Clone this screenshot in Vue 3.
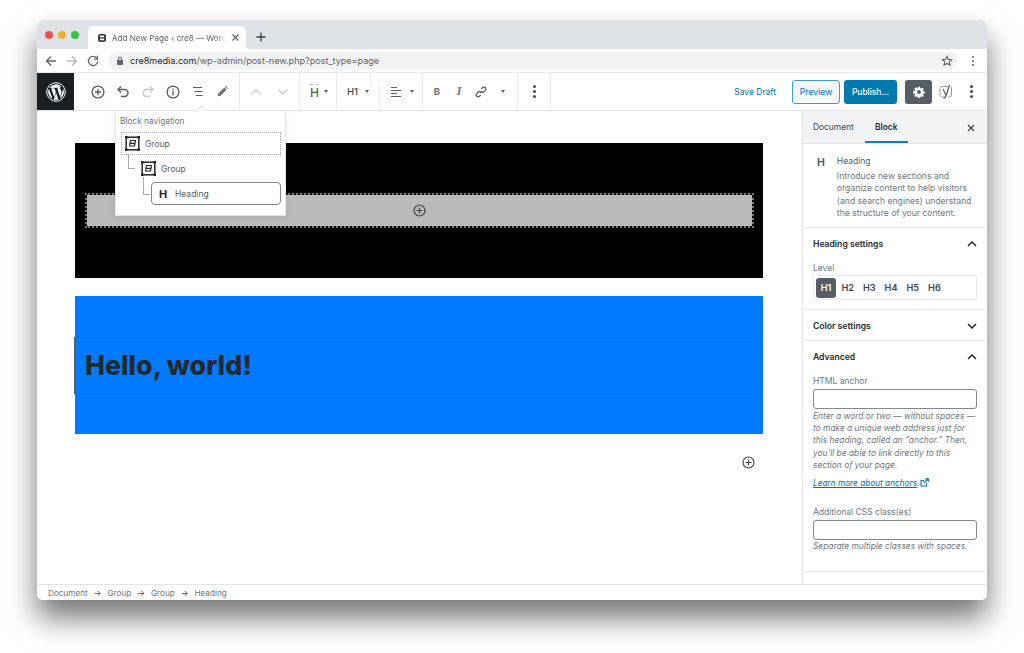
<template>
  <div class="page">
    <div class="window">
      <!-- browser chrome -->
      <div class="tabstrip">
        <div class="lights">
          <span class="light red"></span>
          <span class="light yellow"></span>
          <span class="light green"></span>
        </div>
        <div class="tab">
          <svg class="favicon" width="10" height="10" viewBox="0 0 10 10">
            <rect x="1" y="1" width="8" height="8" rx="2" fill="#3c4043" />
            <rect x="3" y="2.600" width="4" height="1.600" fill="#fff" />
            <rect x="3" y="5.600" width="4" height="1.600" fill="#fff" />
          </svg>
          <span class="tab-title">Add New Page ‹ cre8 — WordP</span>
          <svg width="9" height="9" viewBox="0 0 9 9" class="tab-close">
            <path d="M1.500 1.500l6 6M7.500 1.500l-6 6" stroke="#5f6368" stroke-width="1.200" />
          </svg>
        </div>
        <svg class="newtab" width="10" height="10" viewBox="0 0 10 10">
          <path d="M5 .5v9M.5 5h9" stroke="#3c4043" stroke-width="1.300" />
        </svg>
      </div>
      <div class="addressbar">
        <svg class="nav" width="12" height="12" viewBox="0 0 12 12" fill="none" stroke="#5f6368" stroke-width="1.300">
          <path d="M11 6H1.500M6 1.500L1.500 6 6 10.500" />
        </svg>
        <svg class="nav" width="12" height="12" viewBox="0 0 12 12" fill="none" stroke="#b4b7bb" stroke-width="1.300">
          <path d="M1 6h9.500M6 1.500L10.500 6 6 10.500" />
        </svg>
        <svg class="nav" width="12" height="12" viewBox="0 0 12 12" fill="none" stroke="#5f6368" stroke-width="1.300">
          <path d="M10 3.600A4.600 4.600 0 1 0 10.600 6.500" />
          <path d="M10.500 .8v3.300H7.200" />
        </svg>
        <div class="omnibox">
          <svg width="8" height="10" viewBox="0 0 8 10">
            <rect x="1" y="4" width="6" height="5" rx="1" fill="#5f6368" />
            <path d="M2.200 4.500V3a1.800 1.800 0 0 1 3.600 0v1.500" fill="none" stroke="#5f6368" />
          </svg>
          <span class="url"><b>cre8media.com</b>/wp-admin/post-new.php?post_type=page</span>
          <svg class="star" width="12" height="12" viewBox="0 0 12 12">
            <path d="M6 1.300l1.400 3.100 3.300.3-2.500 2.200.8 3.300L6 8.500l-3 1.700.8-3.300L1.300 4.700l3.300-.3z" fill="none" stroke="#5f6368" stroke-width="1.100" />
          </svg>
        </div>
        <div class="chrome-menu"><i></i><i></i><i></i></div>
      </div>

      <!-- editor toolbar -->
      <div class="toolbar">
        <div class="wp">
          <svg width="20" height="20" viewBox="0 0 20 20">
            <circle cx="10" cy="10" r="9.300" fill="none" stroke="#fff" stroke-width="1" />
            <path fill="#fff" d="M2.200 10c0 3.100 1.800 5.800 4.400 7L2.900 6.800C2.500 7.800 2.200 8.900 2.200 10zM15.300 9.600c0-1-.3-1.600-.6-2.200-.4-.6-.8-1.100-.8-1.700 0-.7.500-1.300 1.200-1.300h.1A7.800 7.800 0 0 0 3.400 5.900h.5c.8 0 2.100-.1 2.100-.1.400 0 .5.600.1.600 0 0-.4.100-.9.100l2.900 8.600 1.700-5.200-1.200-3.400c-.4 0-.8-.1-.8-.1-.4 0-.4-.6 0-.6 0 0 1.300.1 2.100.1.800 0 2.100-.1 2.100-.1.400 0 .5.600.1.600 0 0-.4.100-.9.100l2.900 8.500.8-2.700c.3-1.100.6-1.900.6-2.700zM10.100 10.700l-2.400 7a7.800 7.800 0 0 0 4.800-.1l-.1-.1-2.300-6.800zM16.900 6.200l.1.800c0 .8-.1 1.700-.6 2.800l-2.400 6.900A7.800 7.800 0 0 0 16.900 6.200z" />
          </svg>
        </div>
        <div class="group tools">
          <span class="slot">
            <svg width="14" height="14" viewBox="0 0 14 14" fill="none" stroke="#555d66" stroke-width="1.300">
              <circle cx="7" cy="7" r="5.900" /><path d="M7 3.800v6.400M3.800 7h6.400" />
            </svg>
          </span>
          <span class="slot">
            <svg width="14" height="14" viewBox="0 0 14 14" fill="none" stroke="#555d66" stroke-width="1.400">
              <path d="M5 1.500L2 4.500l3 3" /><path d="M2.500 4.500h6a3.500 3.500 0 0 1 0 7H5" />
            </svg>
          </span>
          <span class="slot">
            <svg width="14" height="14" viewBox="0 0 14 14" fill="none" stroke="#c5c9cd" stroke-width="1.400">
              <path d="M9 1.500l3 3-3 3" /><path d="M11.500 4.500h-6a3.500 3.500 0 0 0 0 7H9" />
            </svg>
          </span>
          <span class="slot">
            <svg width="14" height="14" viewBox="0 0 14 14" fill="none" stroke="#555d66" stroke-width="1.300">
              <circle cx="7" cy="7" r="5.900" /><path d="M7 6v4.500M7 3.400v1.500" />
            </svg>
          </span>
          <span class="slot">
            <svg width="14" height="14" viewBox="0 0 14 14" fill="none" stroke="#555d66" stroke-width="1.100">
              <path d="M2 2.500h9M3.500 6.500h8M5 10.500h6.500" />
            </svg>
          </span>
          <span class="slot">
            <svg width="13" height="13" viewBox="0 0 14 14">
              <path d="M1.800 12.200l.7-3 6.500-6.500 2.300 2.300L4.800 11.500zM9.700 2l.9-.9 2.300 2.300-.9.900z" fill="#6c7278" />
            </svg>
          </span>
        </div>
        <div class="group mover">
          <span class="slot">
            <svg width="12" height="8" viewBox="0 0 12 8" fill="none" stroke="#c5c9cd" stroke-width="1.400"><path d="M1.500 6.500L6 2l4.500 4.500" /></svg>
          </span>
          <span class="slot">
            <svg width="12" height="8" viewBox="0 0 12 8" fill="none" stroke="#c5c9cd" stroke-width="1.400"><path d="M1.500 1.500L6 6l4.500-4.500" /></svg>
          </span>
        </div>
        <div class="group switcher">
          <span class="h-icon">H</span>
          <span class="caret"></span>
        </div>
        <div class="group level">
          <span class="level-label">H1</span>
          <span class="caret"></span>
        </div>
        <div class="group align">
          <svg width="12" height="12" viewBox="0 0 12 12" stroke="#555d66" stroke-width="1.200">
            <path d="M1 1.500h6M1 4.500h10M1 7.500h6M1 10.500h10" />
          </svg>
          <span class="caret"></span>
        </div>
        <div class="group format">
          <span class="fmt bold">B</span>
          <span class="fmt italic">I</span>
          <span class="fmt">
            <svg width="12" height="12" viewBox="0 0 13 13" fill="none" stroke="#555d66" stroke-width="1.300">
              <path d="M5.500 7.500l2-2" />
              <path d="M6.800 3.200l1.300-1.300a2.100 2.100 0 0 1 3 3L9.800 6.200a2.100 2.100 0 0 1-3 0" />
              <path d="M6.200 9.800l-1.300 1.300a2.100 2.100 0 0 1-3-3l1.300-1.300a2.100 2.100 0 0 1 3 0" />
            </svg>
          </span>
          <span class="fmt"><span class="caret"></span></span>
        </div>
        <div class="group more">
          <div class="dots"><i></i><i></i><i></i></div>
        </div>
        <div class="toolbar-right">
          <span class="save">Save Draft</span>
          <span class="preview">Preview</span>
          <span class="publish">Publish...</span>
          <span class="gear">
            <svg width="12" height="12" viewBox="0 0 14 14">
              <path fill="#fff" fill-rule="evenodd" d="M5.800 .8h2.400l.3 1.700 1 .4 1.400-1 1.700 1.700-1 1.400.4 1 1.700.3v2.400l-1.700.3-.4 1 1 1.400-1.700 1.700-1.400-1-1 .4-.3 1.700H5.800l-.3-1.700-1-.4-1.400 1-1.700-1.700 1-1.400-.4-1-1.700-.3V5.800l1.700-.3.4-1-1-1.400 1.700-1.700 1.400 1 1-.4zM7 4.800a2.200 2.200 0 1 0 0 4.400 2.200 2.200 0 0 0 0-4.400z" />
            </svg>
          </span>
          <svg class="yoast" width="14" height="16" viewBox="0 0 14 16" fill="none" stroke="#8d9298" stroke-width=".9">
            <path d="M9 2.500H3.200A2.200 2.200 0 0 0 1 4.700v6.100A2.200 2.200 0 0 0 3.200 13H6" />
            <path d="M12.500 3v8a2 2 0 0 1-2 2H9" />
            <path d="M4 5l2.800 6M10.500 1L7.300 11c-.4 1.500-1.300 2.800-2.800 3.500" stroke="#555d66" stroke-width="1.200" />
          </svg>
          <div class="dots"><i></i><i></i><i></i></div>
        </div>

        <!-- block navigation popover -->
        <div class="popover">
          <div class="pop-arrow"></div>
          <div class="pop-title">Block navigation</div>
          <div class="nav-row level-0">
            <svg class="group-icon" width="15" height="15" viewBox="0 0 15 15">
              <rect x="1.200" y="1.200" width="12.600" height="12.600" fill="none" stroke="#23282d" stroke-width="1.500" />
              <path d="M0 0h2.500v2.500H0zM12.500 0H15v2.500h-2.500zM0 12.500h2.500V15H0zM12.500 12.500H15V15h-2.500z" fill="#23282d" />
              <path d="M5.500 4.500h5l-1 5.500h-5zM5 7.300h5" fill="none" stroke="#23282d" stroke-width="1.200" />
            </svg>
            <span>Group</span>
          </div>
          <div class="nav-row level-1">
            <svg class="group-icon" width="15" height="15" viewBox="0 0 15 15">
              <rect x="1.200" y="1.200" width="12.600" height="12.600" fill="none" stroke="#23282d" stroke-width="1.500" />
              <path d="M0 0h2.500v2.500H0zM12.500 0H15v2.500h-2.500zM0 12.500h2.500V15H0zM12.500 12.500H15V15h-2.500z" fill="#23282d" />
              <path d="M5.500 4.500h5l-1 5.500h-5zM5 7.300h5" fill="none" stroke="#23282d" stroke-width="1.200" />
            </svg>
            <span>Group</span>
          </div>
          <div class="nav-row level-2">
            <span class="nav-h">H</span>
            <span>Heading</span>
          </div>
        </div>
      </div>

      <div class="workspace">
        <div class="canvas">
          <div class="block-black">
            <div class="appender">
              <svg width="13" height="13" viewBox="0 0 14 14" fill="none" stroke="#3a3f44" stroke-width="1.200">
                <circle cx="7" cy="7" r="5.900" /><path d="M7 3.800v6.400M3.800 7h6.400" />
              </svg>
            </div>
          </div>
          <div class="block-blue">
            <h1>Hello, world!</h1>
          </div>
          <div class="bottom-plus">
            <svg width="13" height="13" viewBox="0 0 14 14" fill="none" stroke="#3a3f44" stroke-width="1.200">
              <circle cx="7" cy="7" r="5.900" /><path d="M7 3.800v6.400M3.800 7h6.400" />
            </svg>
          </div>
        </div>

        <aside class="sidebar">
          <div class="side-tabs">
            <span class="side-tab">Document</span>
            <span class="side-tab active">Block</span>
            <svg class="side-close" width="8" height="8" viewBox="0 0 8 8">
              <path d="M1 1l6 6M7 1L1 7" stroke="#40464d" stroke-width="1.300" />
            </svg>
          </div>
          <div class="block-card">
            <span class="card-h">H</span>
            <div>
              <div class="card-title">Heading</div>
              <p>Introduce new sections and organize content to help visitors (and search engines) understand the structure of your content.</p>
            </div>
          </div>
          <section class="panel heading-panel">
            <div class="panel-head">
              <span>Heading settings</span>
              <svg width="10" height="6" viewBox="0 0 10 6" fill="none" stroke="#23282d" stroke-width="1.500"><path d="M1 5l4-4 4 4" /></svg>
            </div>
            <div class="field-label level-title">Level</div>
            <div class="levels">
              <span v-for="(lvl, idx) in levels" :key="lvl" class="lvl" :class="{ on: idx === 0 }">{{ lvl }}</span>
            </div>
          </section>
          <section class="panel closed">
            <div class="panel-head">
              <span>Color settings</span>
              <svg width="10" height="6" viewBox="0 0 10 6" fill="none" stroke="#23282d" stroke-width="1.500"><path d="M1 1l4 4 4-4" /></svg>
            </div>
          </section>
          <section class="panel advanced">
            <div class="panel-head">
              <span>Advanced</span>
              <svg width="10" height="6" viewBox="0 0 10 6" fill="none" stroke="#23282d" stroke-width="1.500"><path d="M1 5l4-4 4 4" /></svg>
            </div>
            <div class="field-label anchor-label">HTML anchor</div>
            <div class="input"></div>
            <p class="help">Enter a word or two — without spaces — to make a unique web address just for this heading, called an “anchor.” Then, you’ll be able to link directly to this section of your page.</p>
            <div class="learn">
              <a>Learn more about anchors</a>
              <svg width="9" height="9" viewBox="0 0 9 9" fill="none" stroke="#0073aa" stroke-width="1.100">
                <path d="M6.500 5v3H1V2.500h3M5 .7h3.300V4M8 1L3.800 5.200" />
              </svg>
            </div>
            <div class="field-label css-label">Additional CSS class(es)</div>
            <div class="input"></div>
            <p class="help">Separate multiple classes with spaces.</p>
          </section>
        </aside>
      </div>

      <div class="statusbar">
        <template v-for="(crumb, idx) in crumbs" :key="idx">
          <span v-if="idx" class="arrow">→</span>
          <span>{{ crumb }}</span>
        </template>
      </div>
    </div>
  </div>
</template>

<script setup>
const levels = ['H1', 'H2', 'H3', 'H4', 'H5', 'H6']
const crumbs = ['Document', 'Group', 'Group', 'Heading']
</script>

<style>
html, body {
  margin: 0;
  background: #fff;
}
</style>

<style scoped>
.page {
  width: 1024px;
  height: 653px;
  box-sizing: border-box;
  padding: 20px 37px 53px;
  font-family: Inter, "Liberation Sans", sans-serif;
  overflow: hidden;
}
.window {
  width: 950px;
  height: 580px;
  display: flex;
  flex-direction: column;
  background: #fff;
  border-radius: 6px;
  box-shadow: 0 18px 30px rgba(0, 0, 0, .55);
}
.tabstrip {
  height: 29px;
  flex: none;
  display: flex;
  align-items: flex-end;
  background: #dee1e6;
  border-radius: 6px 6px 0 0;
}
.lights {
  display: flex;
  gap: 5px;
  padding: 0 0 10px 8px;
  width: 43px;
  box-sizing: border-box;
}
.light {
  width: 8px;
  height: 8px;
  border-radius: 50%;
}
.red { background: #ef5350; }
.yellow { background: #f5b02e; }
.green { background: #35c649; }
.tab {
  position: relative;
  width: 158px;
  height: 23px;
  margin-left: 8px;
  background: #fff;
  border-radius: 6px 6px 0 0;
  display: flex;
  align-items: center;
  padding: 0 6px 0 9px;
  box-sizing: border-box;
  gap: 5px;
}
.tab::after {
  content: "";
  position: absolute;
  right: -5px;
  bottom: 0;
  width: 5px;
  height: 5px;
  background: radial-gradient(circle at 100% 0, transparent 5px, #fff 5.500px);
}
.favicon { flex: none; }
.tab-title {
  flex: 1;
  min-width: 0;
  font-size: 8.100px;
  color: #5f6368;
  white-space: nowrap;
  -webkit-mask-image: linear-gradient(90deg, #000 92%, transparent 100%);
  mask-image: linear-gradient(90deg, #000 92%, transparent 100%);
}
.tab-close { flex: none; }
.newtab {
  margin: 0 0 7px 10px;
}
.addressbar {
  height: 23px;
  flex: none;
  display: flex;
  align-items: center;
  padding-left: 8px;
  border-bottom: 1px solid #e8eaed;
}
.nav {
  margin-right: 9px;
}
.omnibox {
  width: 850px;
  height: 18px;
  background: #f1f3f4;
  border-radius: 9px;
  display: flex;
  align-items: center;
  padding: 0 5px 0 8px;
  box-sizing: border-box;
  gap: 6px;
}
.url {
  flex: 1;
  font-size: 9.050px;
  color: #5f6368;
  white-space: nowrap;
}
.url b {
  font-weight: 400;
  color: #202124;
}
.chrome-menu {
  margin-left: 14px;
  display: flex;
  flex-direction: column;
  gap: 2px;
}
.chrome-menu i {
  width: 2px;
  height: 2px;
  border-radius: 50%;
  background: #5f6368;
}

.toolbar {
  position: relative;
  height: 37px;
  flex: none;
  display: flex;
  border-bottom: 1px solid #e2e4e7;
  z-index: 2;
  background: #fff;
}
.wp {
  width: 37px;
  flex: none;
  background: #191e23;
  display: flex;
  align-items: center;
  justify-content: center;
}
.group {
  position: relative;
  display: flex;
  align-items: center;
  box-sizing: border-box;
  border-right: 1px solid #e8eaed;
  flex: none;
}
.tools { width: 166px; padding-left: 11px; }
.mover { width: 60px; padding-left: 2px; }
.switcher { width: 37px; padding-left: 10px; gap: 5px; }
.switcher::before {
  content: "";
  position: absolute;
  left: 10px;
  top: 11px;
  width: 9px;
  border-top: 1px dashed #b5b9be;
}
.level { width: 43px; padding-left: 10px; gap: 7px; border-right-color: transparent; }
/* the divider after H1 is broken in the screenshot: high part at 369, low part at 379 */
.level::before {
  content: "";
  position: absolute;
  left: 33px;
  top: 0;
  height: 12px;
  border-left: 1px solid #e8eaed;
}
.level::after {
  content: "";
  position: absolute;
  right: -1px;
  top: 12px;
  bottom: 0;
  border-left: 1px solid #e8eaed;
}
.align { width: 43px; padding-left: 10px; gap: 8px; }
.format { width: 95px; padding-left: 3px; }
.more { width: 33px; justify-content: center; }
.slot {
  width: 25px;
  display: flex;
  justify-content: center;
}
.mover .slot { width: 27px; }
.h-icon {
  font-size: 12px;
  font-weight: 500;
  color: #555d66;
  line-height: 1;
  padding-top: 3px;
}
.level-label {
  font-size: 9.500px;
  font-weight: 500;
  color: #40464d;
}
.caret {
  width: 0;
  height: 0;
  border-left: 2.500px solid transparent;
  border-right: 2.500px solid transparent;
  border-top: 3.500px solid #555d66;
}
.fmt {
  width: 22px;
  display: flex;
  justify-content: center;
  align-items: center;
  font-size: 9.500px;
  color: #6c7278;
}
.bold { font-weight: 700; }
.italic { font-style: italic; font-family: "Liberation Serif", serif; font-size: 12px; font-weight: 700; }
.dots {
  display: flex;
  flex-direction: column;
  gap: 2px;
}
.dots i {
  width: 3px;
  height: 3px;
  border-radius: 50%;
  background: #40464d;
}
.toolbar-right {
  flex: 1;
  display: flex;
  align-items: center;
  justify-content: flex-end;
  padding-right: 14px;
}
.save {
  font-size: 8.500px;
  color: #0073aa;
  margin-right: 16px;
}
.preview {
  width: 48px;
  height: 24px;
  box-sizing: border-box;
  border: 1px solid #3f9bc6;
  border-radius: 3px;
  background: #f3f5f6;
  color: #0073aa;
  font-size: 8.700px;
  display: flex;
  align-items: center;
  justify-content: center;
  margin-right: 4px;
}
.publish {
  width: 53px;
  height: 24px;
  border-radius: 3px;
  background: #0079ae;
  color: #fff;
  font-size: 8.400px;
  font-weight: 500;
  display: flex;
  align-items: center;
  justify-content: center;
  margin-right: 8px;
}
.gear {
  width: 27px;
  height: 24px;
  background: #555d66;
  border-radius: 3px;
  display: flex;
  align-items: center;
  justify-content: center;
  margin-right: 7px;
}
.yoast { margin-right: 17px; }

.popover {
  position: absolute;
  left: 78px;
  top: 37px;
  width: 171px;
  height: 106px;
  box-sizing: border-box;
  background: #fff;
  border: 1px solid #e2e4e7;
  box-shadow: 0 2px 6px rgba(0, 0, 0, .08);
  padding: 5px 4px 0;
  font-size: 8.500px;
  color: #555d66;
}
.pop-arrow {
  position: absolute;
  left: 81px;
  top: -4px;
  width: 7px;
  height: 7px;
  background: #fff;
  border-left: 1px solid #e2e4e7;
  border-top: 1px solid #e2e4e7;
  transform: rotate(45deg);
}
.pop-title {
  font-size: 8.300px;
  color: #6c7781;
  height: 16px;
  line-height: 10px;
}
.nav-row {
  display: flex;
  align-items: center;
  height: 23px;
  box-sizing: border-box;
  gap: 5px;
  position: relative;
}
.group-icon { flex: none; }
.level-0 {
  margin-left: 1px;
  width: 160px;
  border: 1px dotted #a2aab2;
  padding-left: 3px;
}
.level-1 {
  margin-left: 21px;
  height: 27px;
}
.level-1::before, .level-2::before {
  content: "";
  position: absolute;
  border-left: 1px solid #a2aab2;
  border-bottom: 1px solid #a2aab2;
  width: 6px;
}
.level-1::before { left: -13px; top: 0; height: 13px; }
.level-2::before { left: -9px; top: -6px; height: 17px; }
.level-2 {
  margin-left: 31px;
  width: 130px;
  border: 1px solid #7e8993;
  border-radius: 4px;
  padding-left: 7px;
  gap: 8px;
}
.nav-h {
  font-weight: 700;
  font-size: 11px;
  color: #23282d;
  width: 8px;
}

.workspace {
  flex: 1;
  display: flex;
  min-height: 0;
}
.canvas {
  flex: 1;
  padding: 32px 0 0 38px;
  box-sizing: border-box;
}
.block-black {
  width: 688px;
  height: 135px;
  background: #000;
  padding: 50px 9px 0 10px;
  box-sizing: border-box;
}
.appender {
  height: 35px;
  box-sizing: border-box;
  background: #b9babb;
  background-clip: padding-box;
  border: 2px dotted #77787a;
  display: flex;
  align-items: center;
  justify-content: center;
}
.block-blue {
  width: 688px;
  height: 138px;
  margin-top: 18px;
  background: #007aff;
  display: flex;
  align-items: center;
}
h1 {
  position: relative;
  flex: 1;
  box-sizing: border-box;
  height: 57px;
  margin: 0;
  padding-left: 10px;
  display: flex;
  align-items: center;
  border-top: 1px solid rgba(25, 30, 35, .06);
  border-bottom: 1px solid rgba(25, 30, 35, .06);
  font-family: Inter, sans-serif;
  font-weight: 800;
  font-size: 26.700px;
  color: #23282d;
}
/* selected-block bar on the heading's left edge */
h1::before {
  content: "";
  position: absolute;
  left: -1px;
  top: -1px;
  bottom: -1px;
  width: 2px;
  background: #555d66;
}
.bottom-plus {
  width: 688px;
  display: flex;
  justify-content: flex-end;
  padding: 22px 8px 0 0;
  box-sizing: border-box;
}

.sidebar {
  width: 185px;
  flex: none;
  border-left: 1px solid #e2e4e7;
  box-sizing: border-box;
  overflow: hidden;
}
.side-tabs {
  height: 33px;
  box-sizing: border-box;
  background: #f3f4f5;
  border-bottom: 1px solid #e2e4e7;
  display: flex;
  align-items: stretch;
  position: relative;
  font-size: 8.400px;
  color: #40464d;
}
.side-tab {
  display: flex;
  align-items: center;
  padding: 0 11px 0 10px;
}
.side-tab.active {
  font-weight: 600;
  color: #23282d;
  width: 43px;
  box-sizing: border-box;
  justify-content: center;
  padding: 2px 0 0;
  border-bottom: 2px solid #0085ba;
}
.side-close {
  position: absolute;
  right: 12px;
  top: 13px;
}
.block-card {
  display: flex;
  height: 84px;
  box-sizing: border-box;
  padding: 11px 10px 0 14px;
  gap: 12px;
  border-bottom: 1px solid #e8eaed;
}
.card-h {
  width: 9px;
  font-size: 10.500px;
  font-weight: 700;
  color: #555d66;
  line-height: 12px;
  padding-top: 2px;
}
.card-title {
  font-size: 8.500px;
  color: #555d66;
  line-height: 12px;
  margin-bottom: 3px;
}
.block-card p {
  margin: 0;
  font-size: 8.600px;
  line-height: 12.300px;
  color: #6c7781;
}
.panel {
  border-bottom: 1px solid #e8eaed;
  padding: 0 10px;
  box-sizing: border-box;
}
.panel-head {
  display: flex;
  align-items: center;
  justify-content: space-between;
  font-size: 8.600px;
  font-weight: 600;
  color: #23282d;
  height: 31px;
}
.heading-panel { height: 82px; }
.closed { height: 31px; }
.level-title { margin-top: 3px; }
.levels {
  margin-top: 1px;
  height: 25px;
  width: 164px;
  box-sizing: border-box;
  border: 1px solid #e8eaed;
  display: flex;
  align-items: center;
  padding-left: 2px;
}
.lvl {
  width: 20px;
  height: 20px;
  margin-right: 1.700px;
  border-radius: 3px;
  display: flex;
  align-items: center;
  justify-content: center;
  font-size: 9.200px;
  font-weight: 600;
  color: #40464d;
}
.lvl.on {
  background: #555d66;
  color: #fff;
}
.field-label {
  font-size: 8.500px;
  color: #6c7781;
  line-height: 12px;
}
.anchor-label { margin-top: 3px; }
.advanced {
  height: 231px;
}
.input {
  margin-top: 2px;
  width: 164px;
  height: 20px;
  box-sizing: border-box;
  border: 1px solid #7e8993;
  border-radius: 3px;
}
.help {
  margin: .5px 0 0;
  font-size: 8.400px;
  font-style: italic;
  line-height: 12.400px;
  color: #6c7781;
  width: 166px;
}
.learn {
  margin-top: 5px;
  display: flex;
  align-items: center;
  gap: 3px;
  font-size: 8.250px;
  font-style: italic;
  color: #0073aa;
  line-height: 12px;
}
.learn a { text-decoration: underline; }
.css-label { margin-top: 17px; }

.statusbar {
  height: 16px;
  flex: none;
  box-sizing: border-box;
  border-top: 1px solid #e2e4e7;
  border-radius: 0 0 6px 6px;
  display: flex;
  align-items: center;
  gap: 6px;
  padding-left: 11px;
  font-size: 8.200px;
  color: #6c7781;
  background: #fff;
}
.arrow { color: #40464d; font-size: 8px; }
</style>
